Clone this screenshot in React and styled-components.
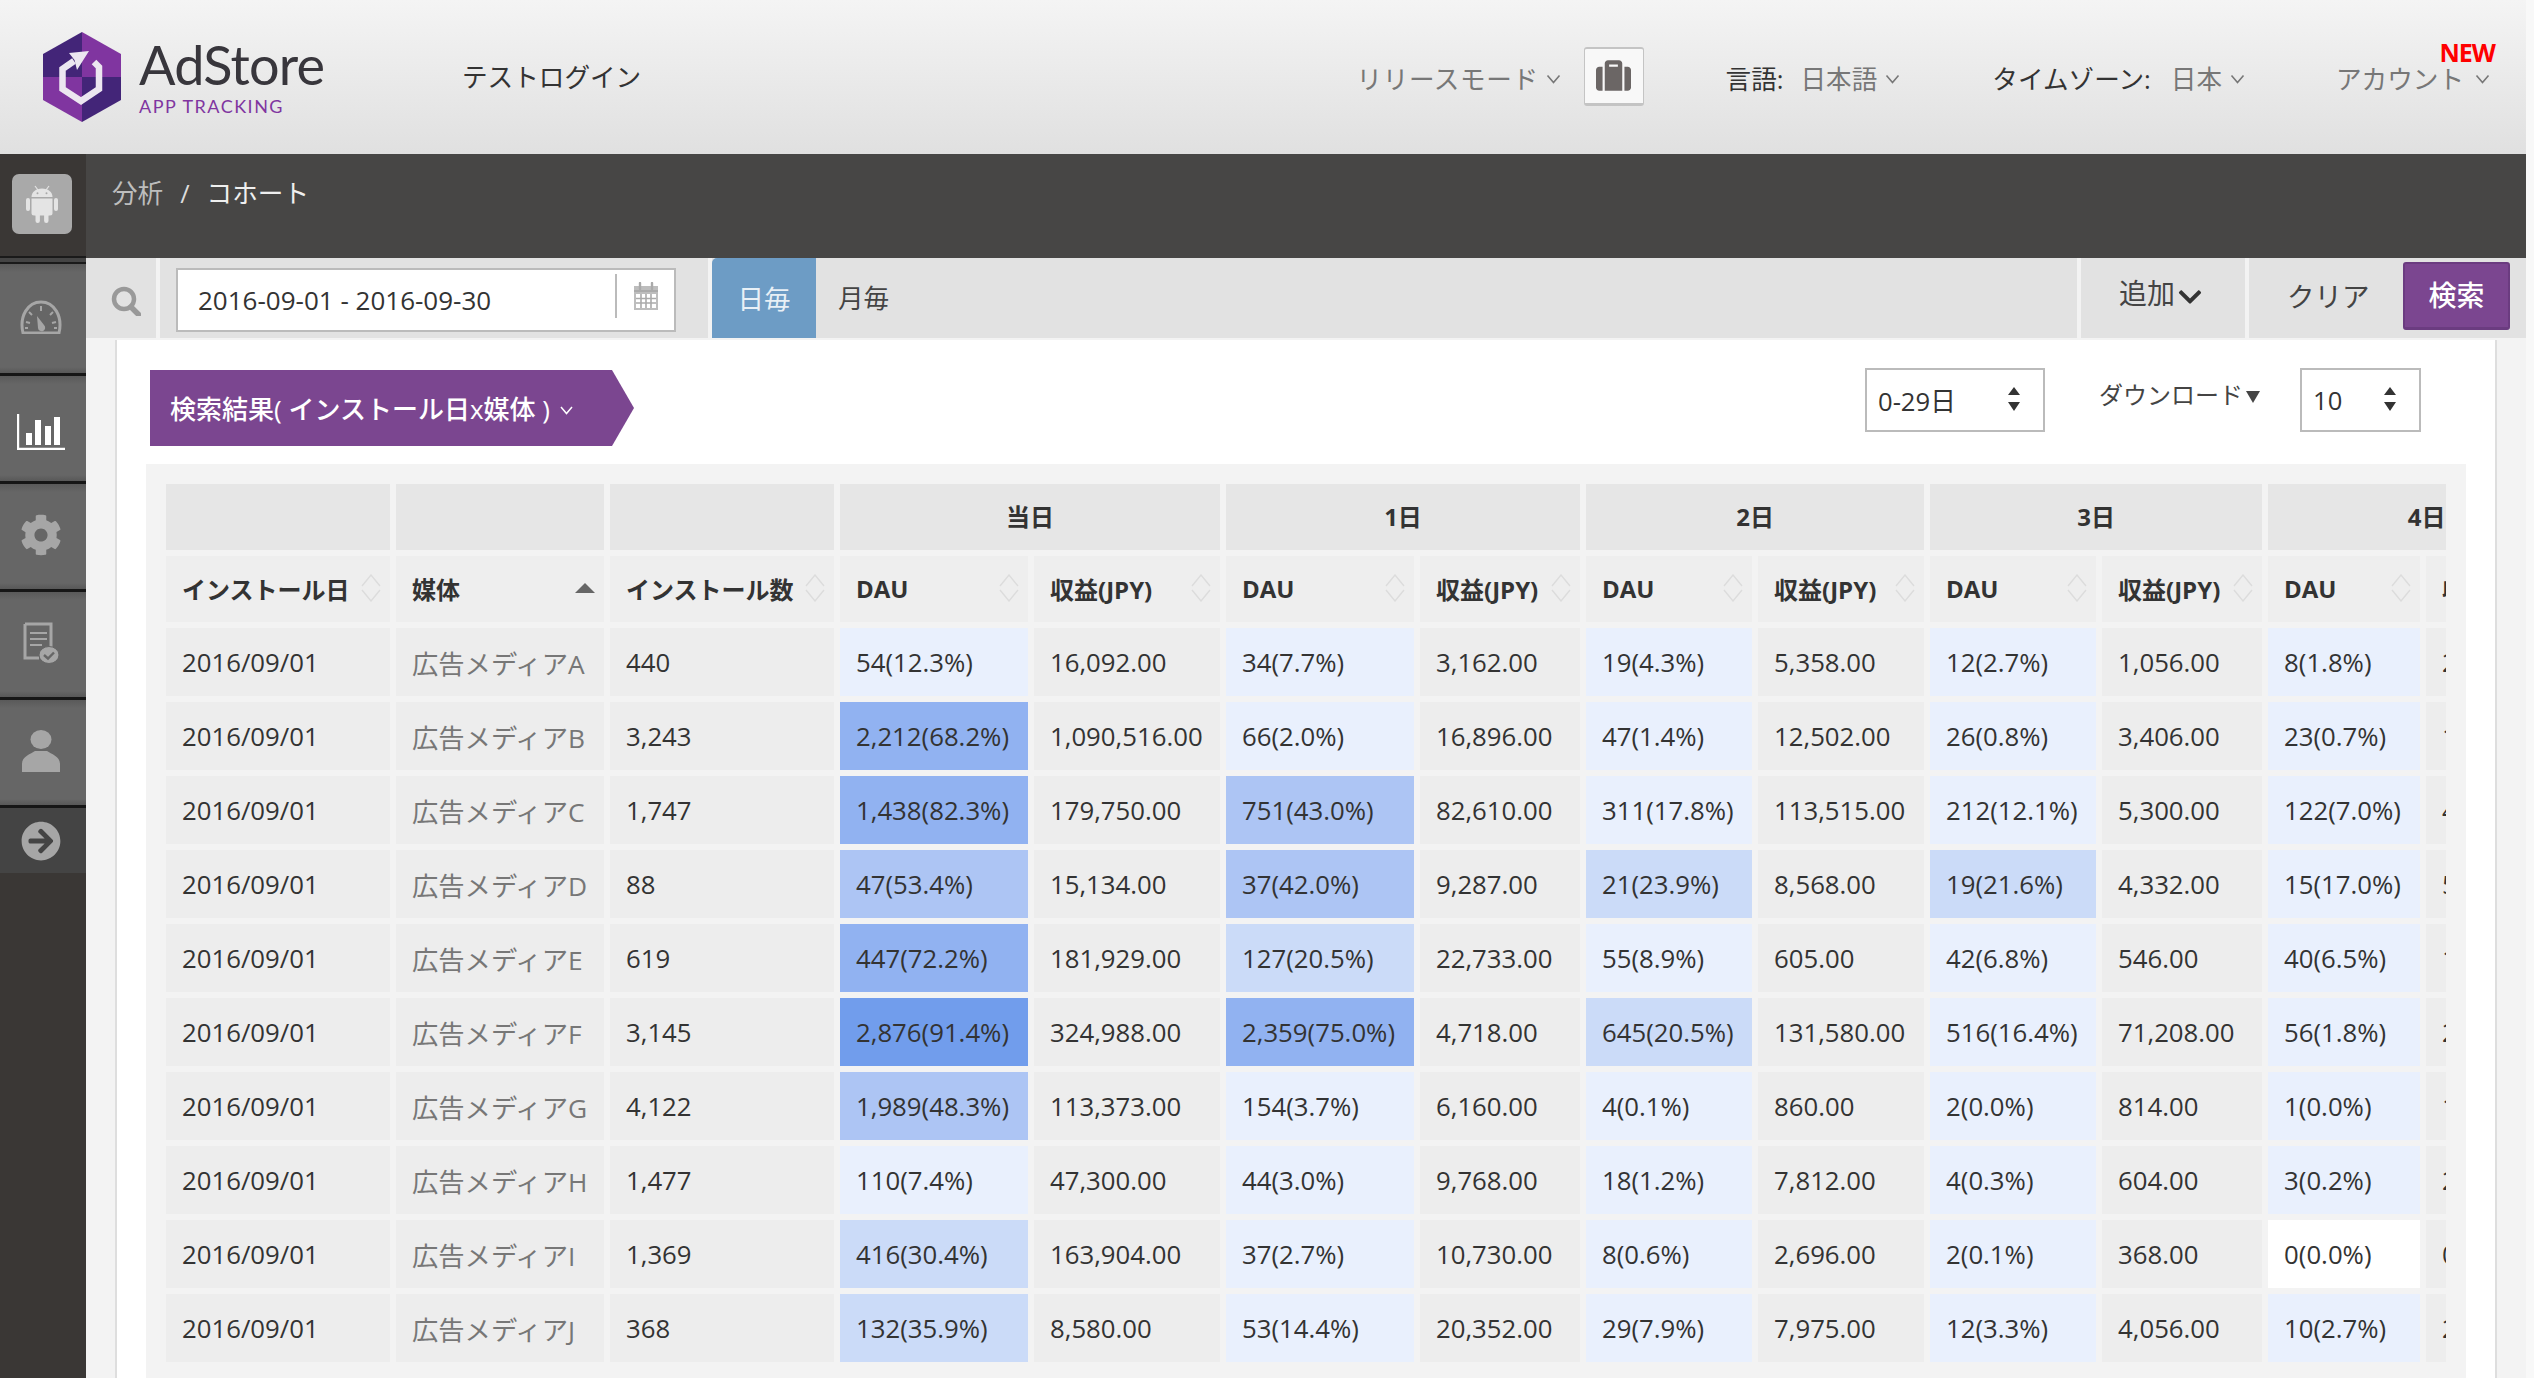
import React from 'react';
import styled, { createGlobalStyle } from 'styled-components';
import { FaCog, FaSuitcase, FaArrowCircleRight, FaChevronDown } from 'react-icons/fa';

const Global = createGlobalStyle`
  html, body { margin: 0; padding: 0; height: 100%; overflow: hidden; background: #f8f8f8; }
  * { box-sizing: border-box; }
  body { font-family: "Open Sans", "Noto Sans CJK JP", sans-serif; font-size: 25.6px; color: #333; }
`;

const Shell = styled.div`
  width: 2526px;
  height: 1378px;
  display: flex;
  flex-direction: column;
  overflow: hidden;
`;

/* ---------- header ---------- */
const Header = styled.header`
  height: 154px;
  flex: none;
  display: flex;
  align-items: center;
  padding: 0 36px 0 43px;
  background: linear-gradient(#f4f4f4, #e0e0e0);
`;
const LogoMark = styled.svg`
  width: 78px;
  height: 90px;
  flex: none;
`;
const Wordmark = styled.div`
  margin-left: 18px;
  width: 184px;
  flex: none;
  display: flex;
  flex-direction: column;
  line-height: 1;
  margin-top: 2px;
`;
const WordTitle = styled.span`
  font-family: "Lato", sans-serif;
  font-size: 54px;
  font-weight: 400;
  color: #38363c;
  letter-spacing: -0.8px;
  line-height: 50px;
`;
const WordSub = styled.span`
  font-family: "Lato", sans-serif;
  font-size: 18px;
  font-weight: 400;
  letter-spacing: 1.5px;
  color: #8035a0;
  margin-top: 6px;
  line-height: 20px;
`;
const LoginName = styled.div`
  margin-left: 139px;
  color: #333;
  margin-top: -2px;
`;
const HeaderRight = styled.div`
  margin-left: auto;
  display: flex;
  align-items: center;
  position: relative;
`;
const HeaderItem = styled.div`
  display: flex;
  align-items: center;
  margin-left: ${p => p.$ml || 0}px;
  margin-top: 2px;
  color: #777;
  letter-spacing: ${p => p.$track || 0}px;
`;
const HeaderLabel = styled.span`
  color: #333;
  margin-right: ${p => p.$gap || 20}px;
`;
const Caret = styled.svg`
  width: 15px;
  height: 10px;
  margin-left: ${p => p.$gap || 8}px;
  margin-top: 2px;
  flex: none;
`;
const CaseButton = styled.div`
  width: 60px;
  height: 59px;
  margin-left: 23px;
  margin-top: -2px;
  background: #f8f8f8;
  border: 1px solid #c4c4c4;
  border-top-width: 2px;
  border-bottom-width: 3px;
  border-radius: 3px;
  display: flex;
  align-items: center;
  justify-content: center;
  color: #6b6665;
  font-size: 35px;
`;
const NewBadge = styled.span`
  position: absolute;
  right: -5px;
  top: -9px;
  color: #f00;
  font-weight: 700;
  font-size: 25px;
  line-height: 24px;
  letter-spacing: -1px;
`;

/* ---------- body ---------- */
const Body = styled.div`
  flex: 1;
  min-height: 0;
  display: grid;
  grid-template-columns: 86px 1fr;
`;
const Sidebar = styled.nav`
  background: #3a3735;
  display: flex;
  flex-direction: column;
`;
const AppBlock = styled.div`
  height: 102px;
  padding: 20px 0 0 12px;
`;
const AppIcon = styled.div`
  width: 60px;
  height: 60px;
  border-radius: 7px;
  background: #a9a9a9;
  display: flex;
  align-items: center;
  justify-content: center;
`;
const Divider = styled.div`
  height: 8px;
  background: #444;
  border-top: 2px solid #1a1a1a;
  border-bottom: 2px solid #1a1a1a;
`;
const NavItem = styled.div`
  height: ${p => p.$first ? 112 : 108}px;
  border-bottom: 3px solid #161616;
  background: linear-gradient(#5a5a5a, #666 8px, #666 calc(100% - 6px), #585858);
  display: flex;
  align-items: center;
  justify-content: center;
  padding: 0 4px ${p => p.$pb ?? 3}px 0;
  padding-top: ${p => p.$pt || 0}px;
  color: ${p => p.$active ? '#fff' : '#a6a6a6'};
  font-size: 42px;
`;
const NavExpand = styled.div`
  height: 65px;
  background: #444;
  display: flex;
  align-items: center;
  justify-content: center;
  padding-right: 4px;
  color: #a6a6a6;
  font-size: 40px;
`;

const Main = styled.main`
  display: flex;
  flex-direction: column;
  min-width: 0;
  background: #f3f3f3;
`;
const Breadcrumb = styled.div`
  height: 104px;
  flex: none;
  background: #474645;
  padding: 24px 0 0 26px;
  display: flex;
  align-items: flex-start;
  line-height: 32px;
`;
const CrumbLink = styled.span`
  color: #bdbdbd;
`;
const CrumbSep = styled.span`
  color: #dcdcdc;
  margin: 0 17px;
`;
const CrumbCurrent = styled.span`
  color: #efefef;
`;

const FilterBar = styled.div`
  height: 82px;
  flex: none;
  padding-bottom: 2px;
  display: flex;
  gap: 4px;
  background: #f3f3f3;
`;
const FilterCell = styled.div`
  background: #e2e2e2;
  display: flex;
  align-items: center;
  width: ${p => p.$w ? p.$w + 'px' : 'auto'};
  flex: ${p => p.$grow ? 1 : 'none'};
  justify-content: ${p => p.$center ? 'center' : 'flex-start'};
`;
const SearchSlot = styled.div`
  margin: 6px 0 0 9px;
  display: flex;
`;
const DateInput = styled.div`
  width: 500px;
  height: 64px;
  margin-left: 16px;
  margin-top: 4px;
  background: #fff;
  border: 2px solid #bbb;
  display: flex;
  align-items: center;
  padding-left: 20px;
  color: #333;
`;
const DateValue = styled.span`
  flex: 1;
  font-size: 26px;
`;
const CalendarSlot = styled.div`
  width: 59px;
  height: 44px;
  margin-top: -8px;
  border-left: 2px solid #bbb;
  display: flex;
  align-items: center;
  justify-content: center;
`;
const ModeGroup = styled.div`
  display: flex;
  flex: 1;
  background: #e2e2e2;
  align-items: stretch;
`;
const ModeActive = styled.div`
  width: 104px;
  background: #6d9cc5;
  color: #e8f0f6;
  border-radius: 5px 0 0 0;
  display: flex;
  align-items: center;
  justify-content: center;
  padding-bottom: 2px;
  font-size: 26.5px;
`;
const ModeOption = styled.div`
  display: flex;
  align-items: center;
  padding: 0 0 2px 22px;
  color: #444;
`;
const AddLabel = styled.div`
  display: flex;
  align-items: center;
  gap: 2px;
  color: #444;
  font-size: 28px;
  padding: 0 0 12px 38px;
`;
const AddCaret = styled(FaChevronDown)`
  width: 26px;
  height: 26px;
  color: #333;
  margin-top: 9px;
`;
const ClearLabel = styled.span`
  margin-left: 38px;
  color: #444;
  width: 116px;
  font-size: 27.5px;
  padding-bottom: 7px;
`;
const SearchButton = styled.button`
  width: 107px;
  height: 68px;
  margin-bottom: 4px;
  border: 2px solid #6b3c80;
  border-bottom-width: 3px;
  border-radius: 3px;
  background: #7b4690;
  color: #fff;
  font: inherit;
  font-size: 28px;
  font-weight: 500;
  padding: 0 0 4px;
`;

const ContentFrame = styled.div`
  flex: 1;
  min-height: 0;
  margin: 0 29px;
  background: #fff;
  border-left: 2px solid #dedede;
  border-right: 2px solid #dedede;
  padding: 30px 29px 0 29px;
  overflow: hidden;
`;
const ResultBar = styled.div`
  display: flex;
  align-items: flex-start;
  height: 76px;
  padding: 0 45px 0 4px;
`;
const ResultTag = styled.div`
  width: 484px;
  height: 76px;
  background: #7b4690;
  color: #fff;
  font-weight: 500;
  font-size: 26px;
  clip-path: polygon(0 0, 462px 0, 100% 50%, 462px 100%, 0 100%);
  display: flex;
  align-items: center;
  padding-left: 20px;
  white-space: nowrap;
`;
const ResultControls = styled.div`
  margin-left: auto;
  display: flex;
  align-items: flex-start;
  margin-top: -2px;
`;
const Stepper = styled.div`
  width: ${p => p.$w}px;
  height: 64px;
  border: 2px solid #bbb;
  display: flex;
  align-items: center;
  justify-content: space-between;
  padding: 0 22px 0 11px;
  color: #333;
`;
const StepArrows = styled.svg`
  width: 14px;
  height: 26px;
  margin-top: -2px;
`;
const DownloadLabel = styled.div`
  display: flex;
  align-items: center;
  gap: 3px;
  margin: 12px 40px 0 54px;
  color: #444;
  font-size: 24px;
  line-height: 30px;
`;
const DownCaret = styled.svg`
  width: 14px;
  height: 12px;
  margin-top: 4px;
`;

const Panel = styled.section`
  margin-top: 18px;
  background: #f3f3f3;
  padding: 20px 20px 0;
  height: 1000px;
`;
const TableClip = styled.div`
  overflow: hidden;
`;
const Table = styled.table`
  table-layout: fixed;
  border-collapse: separate;
  border-spacing: 6px;
  margin: -6px;
  width: ${p => p.$w}px;
`;
const GroupTh = styled.th`
  height: 66px;
  padding: 0 0 4px;
  background: #e6e6e6;
  font-weight: 700;
  font-size: 24px;
  color: #333;
  text-align: center;
  white-space: nowrap;
`;
const ColTh = styled.th`
  height: 66px;
  padding: 0 9px 2px 16px;
  background: #eee;
  font-weight: 700;
  font-size: 24px;
  color: #333;
  text-align: left;
  white-space: nowrap;
  overflow: hidden;
`;
const ColInner = styled.div`
  display: flex;
  align-items: center;
  justify-content: space-between;
`;
const SortIcon = styled.svg`
  width: 20px;
  height: 28px;
  flex: none;
`;
const Td = styled.td`
  height: 68px;
  padding: 0 0 0 16px;
  background: ${p => p.$bg || '#ededed'};
  color: ${p => p.$muted ? '#777' : '#333'};
  font-size: ${p => p.$muted ? 26.3 : 25.75}px;
  white-space: nowrap;
  overflow: hidden;
`;
const TagCaret = styled.svg`
  width: 13px;
  height: 9px;
  margin-left: 10px;
  margin-top: 4px;
`;

/* ---------- drawings ---------- */
const Chevron = ({ gap }) => (
  <Caret $gap={gap} viewBox="0 0 15 10"><path d="M1.5 1.5 7.5 8.5 13.5 1.5" fill="none" stroke="#777" strokeWidth="1.6" /></Caret>
);
const Logo = () => (
  <LogoMark viewBox="43 34 78 90">
    <polygon points="82,34 43,56 43,79 82,79" fill="#432578" />
    <polygon points="82,34 121,56 121,79 82,79" fill="#8035a0" />
    <polygon points="43,79 43,102 82,124 82,79" fill="#8035a0" />
    <polygon points="121,79 121,102 82,124 82,79" fill="#432578" />
    <polyline points="94,64 99,69 99,91 81,103 62.5,91 62.5,71 74,63" fill="none" stroke="#ece6f0" strokeWidth="6.5" />
    <polygon points="69,55 89,53 77,72 74.5,62" fill="#ece6f0" />
  </LogoMark>
);
const AndroidGlyph = () => (
  <svg width="32" height="38" viewBox="0 0 32 38">
    <path d="M9 1l3 4M23 1l-3 4" stroke="#e4e4e4" strokeWidth="1.2" />
    <path d="M5.5 12C5.5 7 10 3.5 16 3.5S26.5 7 26.5 12z" fill="#e4e4e4" />
    <path d="M5.5 13.5h21V28a2.5 2.5 0 0 1-2.5 2.5H8A2.5 2.5 0 0 1 5.5 28z" fill="#e4e4e4" />
    <rect x="0" y="13" width="4" height="13" rx="2" fill="#e4e4e4" />
    <rect x="28" y="13" width="4" height="13" rx="2" fill="#e4e4e4" />
    <rect x="9.5" y="28" width="4.4" height="10" rx="2.2" fill="#e4e4e4" />
    <rect x="18.1" y="28" width="4.4" height="10" rx="2.2" fill="#e4e4e4" />
    <circle cx="11.5" cy="8.2" r="1" fill="#a9a9a9" />
    <circle cx="20.5" cy="8.2" r="1" fill="#a9a9a9" />
  </svg>
);
const SearchGlyph = () => (
  <svg width="30" height="30" viewBox="0 0 30 30">
    <circle cx="13" cy="13" r="10" fill="none" stroke="#999" strokeWidth="4.5" />
    <path d="M20 21 27.5 28.5" stroke="#999" strokeWidth="5.5" strokeLinecap="round" />
  </svg>
);
const CalendarGlyph = () => (
  <svg width="26" height="28" viewBox="0 0 26 28">
    <path d="M1 4h24v24H1z" fill="#bdbdbd" />
    <path d="M1 9h24" stroke="#aaa" strokeWidth="2" />
    <path d="M3 12h20v14H3z" fill="#fff" />
    <path d="M8 12v14M13 12v14M18 12v14M3 16.5h20M3 21h20" stroke="#aaa" strokeWidth="1.6" />
    <path d="M7 1v6M19 1v6" stroke="#aaa" strokeWidth="2.4" strokeLinecap="round" />
  </svg>
);
const Gauge = () => (
  <svg width="42" height="34" viewBox="0 0 42 34">
    <path d="M3 33C-1 16 8 2 21 2s22 14 18 31z" fill="none" stroke="#a6a6a6" strokeWidth="3" />
    <path d="M21 6v5M9 12l3 3M33 12l-3 3M6 22l4 1M36 22l-4 1M5 28h3M37 28h-3" stroke="#a6a6a6" strokeWidth="2" />
    <path d="M17 16l7 9a3.6 3.6 0 1 1-6 3z" fill="#a6a6a6" />
  </svg>
);
const BarsGlyph = () => (
  <svg width="48" height="36" viewBox="0 0 48 36">
    <path d="M1 0v35h47" fill="none" stroke="#fff" strokeWidth="2.4" />
    <path d="M9 19h6v12H9zM18 6h6v25h-6zM28 12h6v19h-6zM37 3h6v28h-6z" fill="#fff" />
  </svg>
);
const ReportGlyph = () => (
  <svg width="36" height="42" viewBox="0 0 36 42">
    <path d="M2 2h26v28M2 2v34h14" fill="none" stroke="#a6a6a6" strokeWidth="3" />
    <path d="M7 11h17M7 17h17M7 23h12" stroke="#a6a6a6" strokeWidth="2" />
    <ellipse cx="26" cy="33" rx="10" ry="8.5" fill="#a6a6a6" stroke="#666" strokeWidth="1" />
    <path d="M21 33l4 3.5 6-6" fill="none" stroke="#666" strokeWidth="2.4" />
  </svg>
);
const PersonGlyph = () => (
  <svg width="38" height="42" viewBox="0 0 38 42">
    <ellipse cx="19" cy="9.5" rx="10.5" ry="9.5" fill="#a6a6a6" />
    <path d="M0 42v-8c0-8 9-10 13-13h12c4 3 13 5 13 13v8z" fill="#a6a6a6" />
  </svg>
);
const Sort = () => (
  <SortIcon viewBox="0 0 20 28">
    <path d="M1 12 10 1l9 11M1 16l9 11 9-11" fill="none" stroke="#dcdcdc" strokeWidth="1.4" />
  </SortIcon>
);
const SortAsc = () => (
  <SortIcon viewBox="0 0 20 28"><path d="M0 19 10 9l10 10z" fill="#666" /></SortIcon>
);
const Arrows = () => (
  <StepArrows viewBox="0 0 14 26">
    <path d="M7 1l6 8H1zM1 16h12l-6 9z" fill="#333" />
  </StepArrows>
);

/* ---------- data ---------- */
const colWidths = [224, 208, 224, 188, 186, 188, 160, 166, 166, 166, 160, 152, 159];
const groups = [['当日', 2], ['1日', 2], ['2日', 2], ['3日', 2], ['4日', 2]];
const heat = v => {
  if (v === 0) return '#fff';
  if (v < 20) return '#e9f0fd';
  if (v < 40) return '#cbdbf8';
  if (v < 60) return '#adc5f4';
  if (v < 85) return '#91b2f1';
  return '#719dec';
};
const rows = [
  ['A', '440', [['54', 12.3], '16,092.00', ['34', 7.7], '3,162.00', ['19', 4.3], '5,358.00', ['12', 2.7], '1,056.00', ['8', 1.8], '2,112.00']],
  ['B', '3,243', [['2,212', 68.2], '1,090,516.00', ['66', 2.0], '16,896.00', ['47', 1.4], '12,502.00', ['26', 0.8], '3,406.00', ['23', 0.7], '1,518.00']],
  ['C', '1,747', [['1,438', 82.3], '179,750.00', ['751', 43.0], '82,610.00', ['311', 17.8], '113,515.00', ['212', 12.1], '5,300.00', ['122', 7.0], '4,270.00']],
  ['D', '88', [['47', 53.4], '15,134.00', ['37', 42.0], '9,287.00', ['21', 23.9], '8,568.00', ['19', 21.6], '4,332.00', ['15', 17.0], '5,100.00']],
  ['E', '619', [['447', 72.2], '181,929.00', ['127', 20.5], '22,733.00', ['55', 8.9], '605.00', ['42', 6.8], '546.00', ['40', 6.5], '1,320.00']],
  ['F', '3,145', [['2,876', 91.4], '324,988.00', ['2,359', 75.0], '4,718.00', ['645', 20.5], '131,580.00', ['516', 16.4], '71,208.00', ['56', 1.8], '2,240.00']],
  ['G', '4,122', [['1,989', 48.3], '113,373.00', ['154', 3.7], '6,160.00', ['4', 0.1], '860.00', ['2', 0.0001], '814.00', ['1', 0.0001], '1,024.00']],
  ['H', '1,477', [['110', 7.4], '47,300.00', ['44', 3.0], '9,768.00', ['18', 1.2], '7,812.00', ['4', 0.3], '604.00', ['3', 0.2], '2,190.00']],
  ['I', '1,369', [['416', 30.4], '163,904.00', ['37', 2.7], '10,730.00', ['8', 0.6], '2,696.00', ['2', 0.1], '368.00', ['0', 0], '0.00']],
  ['J', '368', [['132', 35.9], '8,580.00', ['53', 14.4], '20,352.00', ['29', 7.9], '7,975.00', ['12', 3.3], '4,056.00', ['10', 2.7], '2,450.00']],
];
const pct = v => (v < 0.01 ? 0 : v).toFixed(1);
const tableWidth = colWidths.reduce((a, b) => a + b, 0) + 6 * (colWidths.length + 1);

export default function App() {
  return (
    <>
      <Global />
      <Shell>
        <Header>
          <Logo />
          <Wordmark>
            <WordTitle>AdStore</WordTitle>
            <WordSub>APP TRACKING</WordSub>
          </Wordmark>
          <LoginName>テストログイン</LoginName>
          <HeaderRight>
            <HeaderItem $track={0.6}>リリースモード<Chevron gap={7} /></HeaderItem>
            <CaseButton><FaSuitcase /></CaseButton>
            <HeaderItem $ml={82}><HeaderLabel $gap={17}>言語:</HeaderLabel>日本語<Chevron /></HeaderItem>
            <HeaderItem $ml={92}><HeaderLabel>タイムゾーン:</HeaderLabel>日本<Chevron /></HeaderItem>
            <HeaderItem $ml={91}>アカウント<Chevron gap={11} /></HeaderItem>
            <NewBadge>NEW</NewBadge>
          </HeaderRight>
        </Header>
        <Body>
          <Sidebar>
            <AppBlock><AppIcon><AndroidGlyph /></AppIcon></AppBlock>
            <Divider />
            <NavItem $first><Gauge /></NavItem>
            <NavItem $active $pb={0} $pt={6}><BarsGlyph /></NavItem>
            <NavItem><FaCog /></NavItem>
            <NavItem><ReportGlyph /></NavItem>
            <NavItem><PersonGlyph /></NavItem>
            <NavExpand><FaArrowCircleRight /></NavExpand>
          </Sidebar>
          <Main>
            <Breadcrumb>
              <CrumbLink>分析</CrumbLink>
              <CrumbSep>/</CrumbSep>
              <CrumbCurrent>コホート</CrumbCurrent>
            </Breadcrumb>
            <FilterBar>
              <FilterCell $w={70} $center><SearchSlot><SearchGlyph /></SearchSlot></FilterCell>
              <FilterCell $w={548}>
                <DateInput>
                  <DateValue>2016-09-01 - 2016-09-30</DateValue>
                  <CalendarSlot><CalendarGlyph /></CalendarSlot>
                </DateInput>
              </FilterCell>
              <ModeGroup>
                <ModeActive>日毎</ModeActive>
                <ModeOption>月毎</ModeOption>
              </ModeGroup>
              <FilterCell $w={164}>
                <AddLabel>追加<AddCaret /></AddLabel>
              </FilterCell>
              <FilterCell $w={277}>
                <ClearLabel>クリア</ClearLabel>
                <SearchButton>検索</SearchButton>
              </FilterCell>
            </FilterBar>
            <ContentFrame>
              <ResultBar>
                <ResultTag>
                  検索結果( インストール日x媒体 )
                  <TagCaret viewBox="0 0 13 9"><path d="M1 1l5.5 6.5L12 1" fill="none" stroke="#fff" strokeWidth="1.5" /></TagCaret>
                </ResultTag>
                <ResultControls>
                  <Stepper $w={180}>0-29日<Arrows /></Stepper>
                  <DownloadLabel>ダウンロード<DownCaret viewBox="0 0 14 12"><path d="M0 0h14L7 12z" fill="#444" /></DownCaret></DownloadLabel>
                  <Stepper $w={121}>10<Arrows /></Stepper>
                </ResultControls>
              </ResultBar>
              <Panel>
                <TableClip>
                  <Table $w={tableWidth}>
                    <colgroup>
                      {colWidths.map((w, i) => <col key={i} width={w} />)}
                    </colgroup>
                    <thead>
                      <tr>
                        <GroupTh /><GroupTh /><GroupTh />
                        {groups.map(([t, n]) => <GroupTh key={t} colSpan={n}>{t}</GroupTh>)}
                      </tr>
                      <tr>
                        <ColTh><ColInner>インストール日<Sort /></ColInner></ColTh>
                        <ColTh><ColInner>媒体<SortAsc /></ColInner></ColTh>
                        <ColTh><ColInner>インストール数<Sort /></ColInner></ColTh>
                        {groups.map(([t]) => (
                          <React.Fragment key={t}>
                            <ColTh><ColInner>DAU<Sort /></ColInner></ColTh>
                            <ColTh><ColInner>収益(JPY)<Sort /></ColInner></ColTh>
                          </React.Fragment>
                        ))}
                      </tr>
                    </thead>
                    <tbody>
                      {rows.map(([m, installs, cells]) => (
                        <tr key={m}>
                          <Td>2016/09/01</Td>
                          <Td $muted>広告メディア{m}</Td>
                          <Td>{installs}</Td>
                          {cells.map((c, i) => Array.isArray(c)
                            ? <Td key={i} $bg={heat(c[1])}>{c[0]}({pct(c[1])}%)</Td>
                            : <Td key={i}>{c}</Td>)}
                        </tr>
                      ))}
                    </tbody>
                  </Table>
                </TableClip>
              </Panel>
            </ContentFrame>
          </Main>
        </Body>
      </Shell>
    </>
  );
}
